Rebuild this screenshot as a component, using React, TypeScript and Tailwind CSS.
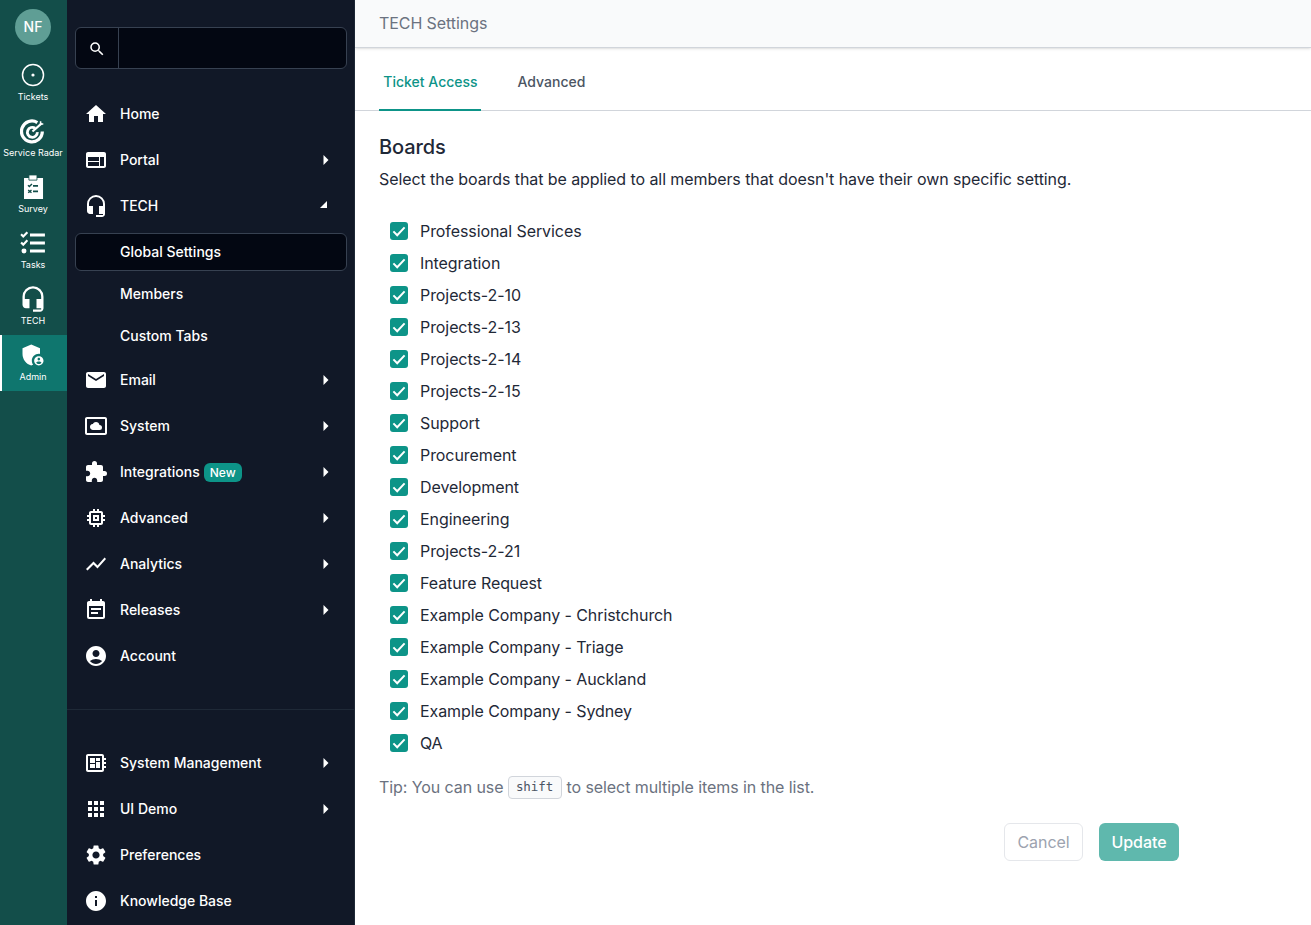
import {
  MdAccountCircle,
  MdAdminPanelSettings,
  MdApps,
  MdDeveloperBoard,
  MdEmail,
  MdEventNote,
  MdExtension,
  MdHeadsetMic,
  MdHome,
  MdInfo,
  MdMemory,
  MdSearch,
  MdSettings,
  MdSettingsSystemDaydream,
  MdShowChart,
  MdWeb,
} from 'react-icons/md';
import type { ComponentType, ReactNode } from 'react';

type IconType = ComponentType<{ className?: string }>;

const TicketsIcon = () => (
  <svg viewBox="0 0 24 24" className="w-6 h-6" fill="none">
    <circle cx="12" cy="12" r="10.5" stroke="white" strokeWidth="1.5" />
    <circle cx="12" cy="12" r="1.6" fill="white" />
  </svg>
);

const RadarIcon = () => (
  <svg viewBox="0 0 24 24" className="w-[26px] h-[26px]" fill="none" stroke="white">
    <path d="M16 4.2A9.6 9.6 0 1 0 20.6 12.5" strokeWidth="3" />
    <path d="M14 9.4A4.6 4.6 0 1 0 16 13" strokeWidth="2.6" />
    <path d="M11.5 12.5 20 5" strokeWidth="2" />
    <path d="M19 3v2.5h2.5" strokeWidth="1.4" />
  </svg>
);

const SurveyIcon = () => (
  <svg viewBox="0 0 24 24" className="w-7 h-7">
    <path d="M4.3 4.3h16.3v18H4.3z" fill="white" />
    <path d="M8.5 1.7h6.9v4.4H8.5z" fill="white" stroke="#134e4a" strokeWidth="0.7" />
    <path d="M7.7 10.4l1.2 1.2 2.2-2.2M7.9 14.6l2.8 2.4M10.7 14.6l-2.8 2.4" stroke="#134e4a" strokeWidth="1.2" fill="none" />
    <path d="M12 11h4.3M12 15.8h4.3" stroke="#134e4a" strokeWidth="1.4" />
  </svg>
);

const TasksIcon = () => (
  <svg viewBox="0 0 24 24" className="w-[26px] h-[26px]" fill="none" stroke="white">
    <path d="M1 4l2 2 3.8-4M1 11.5l2 2 3.8-4" strokeWidth="2" />
    <circle cx="3.7" cy="19.4" r="2.3" fill="white" stroke="none" />
    <path d="M9.2 4.6H23M9.2 12H23M9.2 19.4H23" strokeWidth="2.8" />
  </svg>
);

const RailItem = ({ label, icon, active }: { label: string; icon: ReactNode; active?: boolean }) => (
  <div
    className={`h-14 flex flex-col items-center justify-end pb-[7px] pr-[3px] border-l-2 ${
      active ? 'bg-[#0f766e] border-white' : 'border-transparent'
    }`}
  >
    <div className="h-7 flex items-center justify-center">{icon}</div>
    <span className="mt-[1px] text-[9px] leading-[14px] text-white whitespace-nowrap">{label}</span>
  </div>
);

const RightArrow = () => (
  <svg viewBox="0 0 6 10" className="w-[6px] h-[10px] mr-[1px]">
    <path d="M0.5 0 5.5 5 0.5 10z" fill="white" />
  </svg>
);

const CornerArrow = () => (
  <svg viewBox="0 0 7 7" className="w-[7px] h-[7px] mr-[3px] -mt-[3px]">
    <path d="M7 0v7H0z" fill="white" />
  </svg>
);

const NavItem = ({ icon: Icon, label, arrow, open, badge }: {
  icon: IconType;
  label: string;
  arrow?: boolean;
  open?: boolean;
  badge?: string;
}) => (
  <div className="h-[46px] flex items-center pl-[17px] pr-[24px] text-white">
    <Icon className="w-6 h-6 shrink-0" />
    <span className="ml-[12px] text-sm font-medium">{label}</span>
    {badge && (
      <span className="ml-[4px] h-[19px] px-[6px] rounded-md bg-[#0d9488] text-xs font-medium leading-[19px] text-white">
        {badge}
      </span>
    )}
    <div className="ml-auto">
      {arrow && <RightArrow />}
      {open && <CornerArrow />}
    </div>
  </div>
);

const boards = [
  'Professional Services',
  'Integration',
  'Projects-2-10',
  'Projects-2-13',
  'Projects-2-14',
  'Projects-2-15',
  'Support',
  'Procurement',
  'Development',
  'Engineering',
  'Projects-2-21',
  'Feature Request',
  'Example Company - Christchurch',
  'Example Company - Triage',
  'Example Company - Auckland',
  'Example Company - Sydney',
  'QA',
];

const BoardRow = ({ name }: { name: string }) => (
  <div className="h-8 flex items-center pl-[11px]">
    <div className="w-[18px] h-[18px] rounded-[3px] bg-[#0d9488] flex items-center justify-center">
      <svg viewBox="0 0 18 18" className="w-[18px] h-[18px]" fill="none">
        <path d="M3.4 9.4l3.8 3.8 7.4-7.8" stroke="white" strokeWidth="2" />
      </svg>
    </div>
    <span className="ml-[12px] text-base text-[#1f2937]">{name}</span>
  </div>
);

export default function App() {
  return (
    <div className="h-[925px] w-[1311px] overflow-hidden flex bg-white font-['Inter',sans-serif]">
      <div className="w-[67px] shrink-0 bg-[#134e4a]">
        <div className="h-[55px] pt-[9px] pr-[1px] flex justify-center">
          <div className="w-9 h-9 rounded-full bg-[#5f9e95] flex items-center justify-center text-sm font-medium text-white">
            NF
          </div>
        </div>
        <RailItem label="Tickets" icon={<TicketsIcon />} />
        <RailItem label="Service Radar" icon={<RadarIcon />} />
        <RailItem label="Survey" icon={<SurveyIcon />} />
        <RailItem label="Tasks" icon={<TasksIcon />} />
        <RailItem label="TECH" icon={<MdHeadsetMic className="w-7 h-7 text-white" />} />
        <RailItem label="Admin" icon={<MdAdminPanelSettings className="w-7 h-7 text-white" />} active />
      </div>

      <div className="w-[288px] shrink-0 bg-[#111827] border-r border-[#1f2937]">
        <div className="mt-[27px] mx-[8px] h-[42px] w-[272px] flex rounded-md border border-[#374151] bg-[#030712]">
          <div className="w-[43px] pt-[1px] flex items-center justify-center border-r border-[#374151]">
            <MdSearch className="w-[18px] h-[18px] text-white" />
          </div>
        </div>

        <div className="mt-[22px]">
          <NavItem icon={MdHome} label="Home" />
          <NavItem icon={MdWeb} label="Portal" arrow />
          <NavItem icon={MdHeadsetMic} label="TECH" open />
          <div className="h-[44px] pt-[4px] pb-[2px] mx-[8px]">
            <div className="h-[38px] w-[272px] flex items-center pl-[44px] rounded-md border border-[#374151] bg-[#030712] text-sm font-medium text-white">
              Global Settings
            </div>
          </div>
          <div className="h-[42px] flex items-center pl-[53px] text-sm font-medium text-white">Members</div>
          <div className="h-[42px] flex items-center pl-[53px] text-sm font-medium text-white">Custom Tabs</div>
          <NavItem icon={MdEmail} label="Email" arrow />
          <NavItem icon={MdSettingsSystemDaydream} label="System" arrow />
          <NavItem icon={MdExtension} label="Integrations" arrow badge="New" />
          <NavItem icon={MdMemory} label="Advanced" arrow />
          <NavItem icon={MdShowChart} label="Analytics" arrow />
          <NavItem icon={MdEventNote} label="Releases" arrow />
          <NavItem icon={MdAccountCircle} label="Account" />
        </div>

        <div className="mt-[30px] mb-[30px] border-t border-[#1f2937]" />

        <NavItem icon={MdDeveloperBoard} label="System Management" arrow />
        <NavItem icon={MdApps} label="UI Demo" arrow />
        <NavItem icon={MdSettings} label="Preferences" />
        <NavItem icon={MdInfo} label="Knowledge Base" />
      </div>

      <div className="flex-1 min-w-0 tracking-[-0.08px]">
        <div className="h-[48px] px-[24px] pb-[2px] flex items-center bg-[#f9fafb] border-b border-[#d1d5db] shadow-sm text-base text-[#6b7280]">
          TECH Settings
        </div>

        <div className="h-[63px] flex border-b border-[#d1d5db] px-[24px] text-sm font-medium tracking-normal">
          <div className="w-[102px] pt-[6px] pl-[1px] flex items-center justify-center border-b-2 border-[#0d9488] -mb-px text-[#0d9488]">
            Ticket Access
          </div>
          <div className="ml-[36.5px] pt-[6px] flex items-center text-[#4b5563]">Advanced</div>
        </div>

        <div className="px-[24px]">
          <h2 className="mt-[24px] text-xl leading-[24px] font-medium text-[#1f2937]">Boards</h2>
          <p className="mt-[8px] text-base leading-[24px] text-[#1f2937]">
            Select the boards that be applied to all members that doesn't have their own specific setting.
          </p>

          <div className="mt-[24px]">
            {boards.map((name) => (
              <BoardRow key={name} name={name} />
            ))}
          </div>

          <p className="mt-[16px] h-[24px] flex items-center text-base text-[#6b7280]">
            Tip: You can use
            <kbd className="ml-[4px] mr-[5px] h-[23px] w-[54px] pt-[1px] flex items-center justify-center rounded border border-[#d1d5db] bg-[#f9fafb] font-['DejaVu_Sans_Mono',monospace] text-[12.5px] text-[#4b5563]">
              shift
            </kbd>
            to select multiple items in the list.
          </p>

          <div className="mt-[24px] w-[800px] flex justify-end gap-[16px]">
            <button className="h-[38px] w-[79px] rounded-md border border-[#e5e7eb] bg-white text-base text-[#9ca3af]">
              Cancel
            </button>
            <button className="h-[38px] w-[80px] rounded-md bg-[#5fb8ad] text-base font-medium text-white">
              Update
            </button>
          </div>
        </div>
      </div>
    </div>
  );
}
